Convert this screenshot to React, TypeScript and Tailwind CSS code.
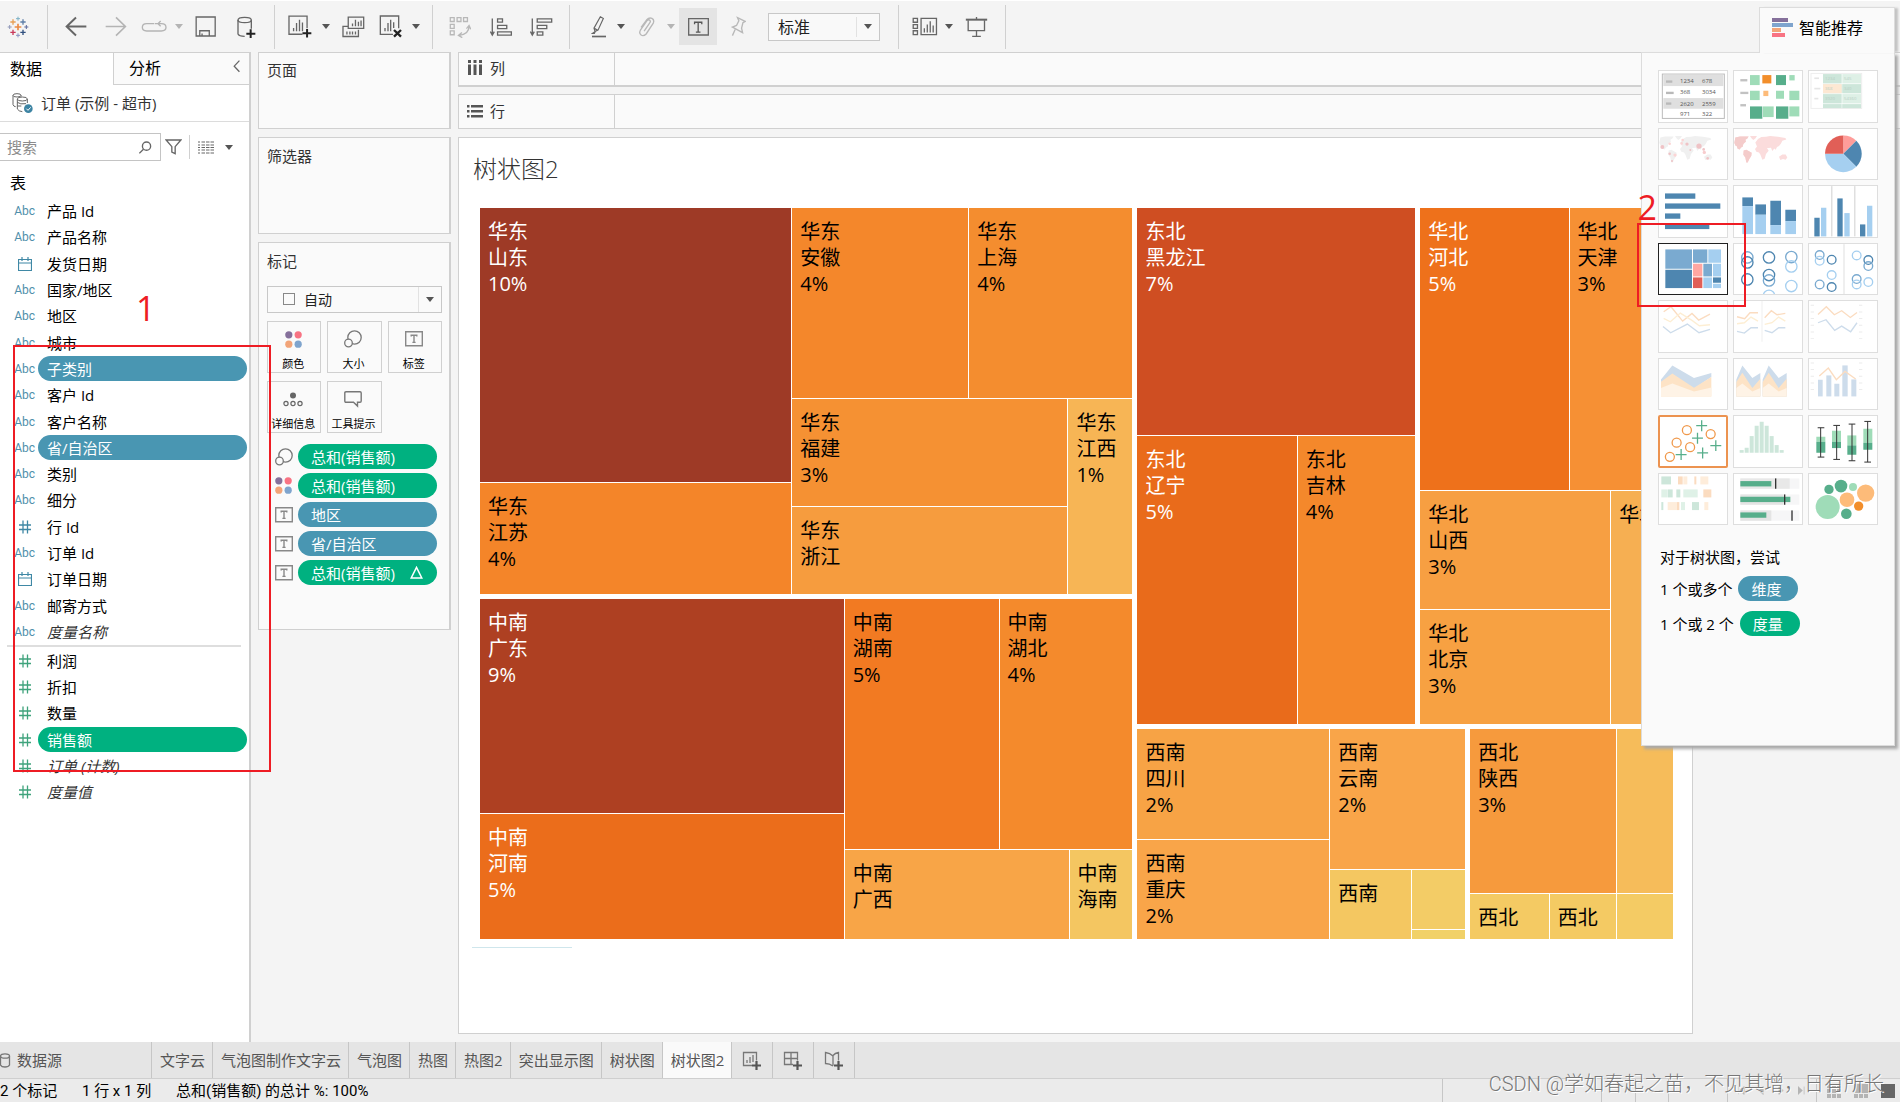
import React from "react";

type IconProps = { box: string; w: number; h: number; children: React.ReactNode; className?: string };

/** Line icon drawn on a grid of three units per pixel. */
function Icon({ box, w, h, children, className = "" }: IconProps) {
  return (
    <svg viewBox={box} width={w} height={h} className={"shrink-0 " + className} fill="none" stroke="#666" strokeWidth={4} aria-hidden="true">
      {children}
    </svg>
  );
}

function Caret({ light = false }: { light?: boolean }) {
  return (
    <svg viewBox="0 0 8 5" width={8} height={5} className="shrink-0" aria-hidden="true">
      <path d="M0 0h8L4 5z" fill={light ? "#b4b4b4" : "#555"} />
    </svg>
  );
}

function Tool({ label, className, children }: { label: string; className: string; children: React.ReactNode }) {
  return (
    <button type="button" aria-label={label} className={"flex h-[37px] shrink-0 items-center justify-center " + className}>
      {children}
    </button>
  );
}

function Sep({ className }: { className: string }) {
  return <div className={"h-11 w-px shrink-0 bg-[#d0d0d0] " + className} />;
}

const plus = (x: number, y: number, r: number, c: string, w = 4) => (
  <path key={x + "-" + y} d={`M${x - r} ${y}h${2 * r}M${x} ${y - r}v${2 * r}`} stroke={c} strokeWidth={w} />
);

function Toolbar() {
  return (
    <header className="flex h-[52px] items-center border-t border-white bg-[#f4f4f4]">
      <Tool label="Tableau" className="w-9">
        <Icon box="21 47 66 66" w={22} h={22}>
          {plus(54, 80, 10, "#eb8a44", 5)}
          {plus(39, 65, 8, "#e8a157", 4)}
          {plus(69, 65, 8, "#5e7fa8", 4)}
          {plus(39, 96, 8, "#c9395a", 4)}
          {plus(69, 96, 8, "#31507f", 4)}
          {plus(54, 55, 6, "#7db0c4", 3)}
          {plus(54, 105, 6, "#8a93c2", 3)}
          {plus(29, 80, 6, "#9098b8", 3)}
          {plus(79, 80, 6, "#5d6a9e", 3)}
        </Icon>
      </Tool>
      <Sep className="ml-[11px]" />
      <Tool label="撤消" className="ml-2 w-10">
        <Icon box="192 48 68 64" w={22} h={21}><path d="M258 80H198M226 52l-29 28 29 28" strokeWidth={6} /></Icon>
      </Tool>
      <Tool label="重做" className="w-10">
        <Icon box="312 48 68 64" w={22} h={21}><path d="M314 80h60M346 52l29 28-29 28" strokeWidth={5} stroke="#b4b4b4" /></Icon>
      </Tool>
      <Tool label="重播" className="w-9">
        <Icon box="421 58 78 42" w={26} h={14}>
          <path d="M460 69h-22q-13 0-13 11t13 11h44q14 0 14-11t-14-11h-6M480 61l-8 8 8 8M462 69h14" stroke="#b4b4b4" />
        </Icon>
      </Tool>
      <Tool label="重播选项" className="w-[14px]"><Caret light /></Tool>
      <Tool label="保存" className="w-10">
        <Icon box="584 48 66 64" w={22} h={21}><path d="M587 51h58v58h-58zM598 109V93h29v16M605 109v-8" /></Icon>
      </Tool>
      <Tool label="新建数据源" className="w-10">
        <Icon box="708 47 57 66" w={19} h={22}>
          <ellipse cx="731" cy="59" rx="20" ry="8" />
          <path d="M711 59v42q3 7 20 7M751 59v26" />
          <path d="M736 100h27M749 87v26" stroke="#222" strokeWidth={6} />
        </Icon>
      </Tool>
      <Sep className="ml-2" />
      <Tool label="新建工作表" className="ml-1.5 w-[38px]">
        <Icon box="864 45 73 69" w={24} h={23}>
          <path d="M908 103h-41V48h55v37M881 94V84M890 94V69M899 94V59M908 94V67" />
          <path d="M908 100h27M922 87v26" stroke="#222" strokeWidth={6} />
        </Icon>
      </Tool>
      <Tool label="新建选项" className="w-[14px]"><Caret /></Tool>
      <Tool label="复制工作表" className="w-10">
        <Icon box="1026 45 70 66" w={23} h={22}>
          <path d="M1045 48h47v34h-47zM1058 76V67M1067 76V56M1076 76V62M1084 76V58M1043 76h-14v31h47V86M1041 101v-9M1050 101v-9M1058 101v-9M1067 101v-9" />
        </Icon>
      </Tool>
      <Tool label="清除工作表" className="w-9">
        <Icon box="1136 45 72 69" w={24} h={23}>
          <path d="M1178 103h-38V48h55v37M1154 94V84M1163 94V69M1171 94V59M1180 84V67" />
          <path d="M1181 90l21 20M1202 90l-21 20" stroke="#222" strokeWidth={7} />
        </Icon>
      </Tool>
      <Tool label="清除选项" className="w-[14px]"><Caret /></Tool>
      <Sep className="ml-[9px]" />
      <Tool label="交换行和列" className="ml-2 w-[38px]">
        <Icon box="1346 45 68 68" w={22} h={22}>
          <path d="M1350 50h12v12h-12zM1371 50h12v12h-12zM1391 50h12v12h-12zM1350 71h12v12h-12zM1350 91h12v12h-12zM1408 76q0 26-31 29M1400 84l8-10 5 12M1386 96l-11 9 12 7" stroke="#b8b8b8" />
        </Icon>
      </Tool>
      <Tool label="升序排序" className="ml-0.5 w-10">
        <Icon box="1468 48 70 60" w={23} h={20}>
          <path d="M1475 52v48M1469 92l6 11 6-11M1491 53h15v10h-15zM1491 73h28v10h-28zM1491 93h42v10h-42z" />
        </Icon>
      </Tool>
      <Tool label="降序排序" className="w-10">
        <Icon box="88 48 70 60" w={23} h={20}>
          <path d="M95 52v48M89 92l6 11 6-11M110 53h44v10h-44zM110 73h29v10h-29zM110 93h17v10h-17z" />
        </Icon>
      </Tool>
      <Sep className="ml-2" />
      <Tool label="突出显示" className="ml-[13px] w-[31px]">
        <Icon box="272 47 48 68" w={16} h={23}>
          <path d="M300 52l9 5-16 35-9 4-3-10zM276 102l9-6-3 6zM282 86l10 6" strokeWidth={3.5} />
          <path d="M275 111h42" strokeWidth={5} />
        </Icon>
      </Tool>
      <Tool label="突出显示选项" className="w-[14px]"><Caret /></Tool>
      <Tool label="分组成员" className="w-9">
        <Icon box="414 48 50 62" w={17} h={21}>
          <path d="M423 82l16-22q8-9 16-5t4 14l-21 32q-8 8-15 3t-2-14l20-29q5-4 8 0t-1 8l-16 24" stroke="#b8b8b8" />
        </Icon>
      </Tool>
      <Tool label="分组选项" className="w-[14px]"><Caret light /></Tool>
      <Tool label="显示标记标签" className="ml-px w-[38px] bg-[#e4e4e4]">
        <Icon box="562 48 68 58" w={23} h={19}>
          <path d="M566 53h60v50h-60z" />
          <path d="M584 70v-6h22v6M595 64v30M588 94h14" stroke="#555" strokeWidth={4} />
        </Icon>
      </Tool>
      <Tool label="固定轴" className="w-10">
        <Icon box="688 48 50 62" w={17} h={21}>
          <path d="M713 53l23 11-7 4-4 16 3 13-30-16 12-5 7-14zM706 88l-8 18" stroke="#b8b8b8" />
        </Icon>
      </Tool>
      <div className="relative ml-[11px] w-28 shrink-0">
        <select aria-label="适合" className="h-7 w-full appearance-none border border-[#c8c8c8] bg-[#f9f9f9] pl-[9px] text-base leading-6 text-[#222]">
          <option>标准</option>
        </select>
        <div className="pointer-events-none absolute inset-y-1 right-0 flex w-6 items-center justify-center border-l border-[#e2e2e2] pr-0.5"><Caret /></div>
      </div>
      <Sep className="ml-[18px]" />
      <Tool label="显示/隐藏卡" className="ml-[9px] w-[34px]">
        <Icon box="1240 50 78 58" w={26} h={19}>
          <path d="M1243 54h13v12h-13zM1243 73h13v12h-13zM1243 92h13v12h-13zM1267 54h47v50h-47zM1277 97V84M1286 97V73M1295 97V63M1304 97V76" />
        </Icon>
      </Tool>
      <Tool label="卡选项" className="w-[14px]"><Caret /></Tool>
      <Tool label="演示模式" className="w-10">
        <Icon box="1396 47 68 66" w={23} h={22}>
          <path d="M1398 58h64" strokeWidth={6} />
          <path d="M1430 50v8M1405 60v31h49V60M1430 91v16M1417 108h26" />
        </Icon>
      </Tool>
      <Sep className="ml-[9px]" />
    </header>
  );
}

type Kind = "abc" | "date" | "num";
type Field = { kind: Kind; name: string; picked?: boolean; generated?: boolean };

const dimensions: Field[] = [
  { kind: "abc", name: "产品 Id" },
  { kind: "abc", name: "产品名称" },
  { kind: "date", name: "发货日期" },
  { kind: "abc", name: "国家/地区" },
  { kind: "abc", name: "地区" },
  { kind: "abc", name: "城市" },
  { kind: "abc", name: "子类别", picked: true },
  { kind: "abc", name: "客户 Id" },
  { kind: "abc", name: "客户名称" },
  { kind: "abc", name: "省/自治区", picked: true },
  { kind: "abc", name: "类别" },
  { kind: "abc", name: "细分" },
  { kind: "num", name: "行 Id" },
  { kind: "abc", name: "订单 Id" },
  { kind: "date", name: "订单日期" },
  { kind: "abc", name: "邮寄方式" },
  { kind: "abc", name: "度量名称", generated: true },
];

const measures: Field[] = [
  { kind: "num", name: "利润" },
  { kind: "num", name: "折扣" },
  { kind: "num", name: "数量" },
  { kind: "num", name: "销售额", picked: true },
  { kind: "num", name: "订单 (计数)", generated: true },
  { kind: "num", name: "度量值", generated: true },
];

function FieldRow({ field, measure }: { field: Field; measure: boolean }) {
  const c = measure ? "#3fa37c" : "#3f88a5";
  return (
    <li className="flex min-h-0 flex-1 items-center">
      <span className="flex w-[38px] shrink-0 items-center justify-end pr-[3px]">
        {field.kind === "abc" && <span className="text-xs leading-5 text-[#4f8fab] [font-family:Roboto,sans-serif]">Abc</span>}
        {field.kind === "date" && (
          <svg viewBox="0 0 14 14" width={14} height={14} fill="none" stroke={c} className="mr-[3px]" aria-hidden="true">
            <path d="M.5 2.5h13v11H.5zM.5 6h13M4 0v4M10 0v4" strokeWidth={1.2} />
          </svg>
        )}
        {field.kind === "num" && (
          <svg viewBox="0 0 14 14" width={14} height={14} fill="none" stroke={c} className="mr-[3px]" aria-hidden="true">
            <path d="M1 5h12M1 9.5h12M5 .5v13M9.5 .5v13" strokeWidth={1.3} />
          </svg>
        )}
      </span>
      <button
        type="button"
        className={
          "h-[25px] w-[209px] rounded-full px-[9px] text-left leading-6 " +
          (field.picked ? (measure ? "bg-[#00b180] text-white" : "bg-[#4996b2] text-white") : field.generated ? "italic text-[#333]" : "text-black")
        }
      >
        {field.name}
      </button>
    </li>
  );
}

function DataPane() {
  return (
    <aside className="relative flex w-[251px] shrink-0 flex-col border-r-2 border-[#d0d0d0] bg-white">
      <div className="flex h-[33px] shrink-0 text-base leading-6 text-black">
        <button type="button" className="w-[113px] border-t border-[#d0d0d0] pb-px pl-[10px] text-left">数据</button>
        <button type="button" className="flex-1 border border-r-0 border-[#d0d0d0] bg-[#fafafa] pb-px pl-[15px] text-left">分析</button>
        <button type="button" aria-label="折叠" className="flex w-[26px] items-center justify-center border-y border-[#d0d0d0] bg-[#fafafa] pb-1">
          <Icon box="696 182 26 40" w={9} h={13}><path d="M718 184l-16 17 16 17" /></Icon>
        </button>
      </div>
      <button type="button" className="flex h-[37px] shrink-0 items-center gap-2 border-b border-[#dcdcdc] pl-3 text-left text-[#333]">
        <Icon box="37 278 63 63" w={21} h={21}>
          <g strokeWidth={3}>
            <ellipse cx="52" cy="285" rx="12" ry="5" />
            <path d="M40 285v28q2 6 8 6M64 285v4" />
            <ellipse cx="68" cy="296" rx="15" ry="6" />
            <path d="M53 296v30q4 7 15 8M83 296v12M53 306q8 7 26 4M53 317h12" />
          </g>
          <circle cx="86" cy="325" r="13" fill="#3d84a3" stroke="none" />
          <path d="M80 325l5 5 8-9" stroke="#fff" strokeWidth={3} />
        </Icon>
        订单 (示例 - 超市)
      </button>
      <div className="mt-[11px] flex h-7 shrink-0 items-center">
        <label className="flex h-full w-[161px] items-center border border-l-0 border-[#c4c4c4] pr-2">
          <input type="text" placeholder="搜索" aria-label="搜索" className="w-full min-w-0 pl-[7px] outline-none placeholder:text-[#8c8c8c]" />
          <Icon box="420 424 38 38" w={13} h={13}><circle cx="442" cy="439" r="12" /><path d="M433 448l-12 12" /></Icon>
        </label>
        <button type="button" aria-label="筛选" className="flex w-[25px] items-center justify-center">
          <Icon box="496 418 50 48" w={17} h={16}><path d="M499 421h44l-17 20v21l-10-5v-16z" /></Icon>
        </button>
        <button type="button" aria-label="视图" className="ml-[3px] flex h-6 items-center border-l border-[#d0d0d0] pl-2">
          <svg viewBox="0 0 16 13" width={16} height={13} stroke="#666" strokeWidth={1.2} aria-hidden="true">
            <path d="M0 1h2M3.500 1h3.500M8 1h3.500M12.500 1h3.500M0 4h2M3.500 4h3.500M8 4h3.500M12.500 4h3.500M0 6.500h2M3.500 6.500h3.500M8 6.500h3.500M12.500 6.500h3.500M0 9h2M3.500 9h3.500M8 9h3.500M12.500 9h3.500M0 12h2M3.500 12h3.500M8 12h3.500M12.500 12h3.500" />
          </svg>
          <span className="ml-[11px]"><Caret /></span>
        </button>
      </div>
      <h2 className="mt-[10px] shrink-0 pl-[10px] text-base leading-6 text-black">表</h2>
      <ul className="mt-[3px] flex h-[447px] shrink-0 flex-col">
        {dimensions.map((f) => <FieldRow key={f.name} field={f} measure={false} />)}
      </ul>
      <hr className="mr-2 ml-[7px] border-0 border-t-2 border-[#dedede]" />
      <ul className="mt-px flex h-[157px] shrink-0 flex-col">
        {measures.map((f) => <FieldRow key={f.name} field={f} measure />)}
      </ul>
    </aside>
  );
}

const ColorDots = () => (
  <svg viewBox="0 0 16 16" width={17} height={17} aria-hidden="true">
    <circle cx="3.6" cy="3.6" r="3.4" fill="#85709b" />
    <circle cx="12.4" cy="3.6" r="3.4" fill="#f87383" />
    <circle cx="3.6" cy="12.4" r="3.4" fill="#f2a478" />
    <circle cx="12.4" cy="12.4" r="3.4" fill="#7fa4cd" />
  </svg>
);

const SizeIcon = () => (
  <svg viewBox="0 0 18 18" width={18} height={18} fill="none" stroke="#777" strokeWidth={1.3} aria-hidden="true">
    <circle cx="10.5" cy="7.5" r="6.7" />
    <circle cx="4.5" cy="13" r="3.8" fill="#fafafa" />
  </svg>
);

const LabelIcon = () => (
  <svg viewBox="0 0 18 16" width={18} height={16} fill="none" stroke="#888" strokeWidth={1.4} aria-hidden="true">
    <path d="M.7 .7h16.6v14H.7zM6.2 5.6V4.2h5.6v1.4M9 4.2v7.2M7.4 11.4h3.2" />
  </svg>
);

const DetailIcon = () => (
  <svg viewBox="0 0 20 15" width={20} height={15} fill="none" stroke="#666" strokeWidth={1.2} aria-hidden="true">
    <circle cx="10" cy="3.5" r="3" fill="#666" stroke="none" />
    <circle cx="3" cy="11.5" r="2.1" /><circle cx="10" cy="11.5" r="2.1" /><circle cx="17" cy="11.5" r="2.1" />
  </svg>
);

const TooltipIcon = () => (
  <svg viewBox="0 0 18 17" width={18} height={17} fill="none" stroke="#777" strokeWidth={1.4} aria-hidden="true">
    <path d="M2 .8h14q1.2 0 1.2 1.2v8q0 1.2-1.2 1.2h-2.5V15L9.500 11.200H2Q.8 11.200 .8 10V2Q.8 .8 2 .8z" />
  </svg>
);

const markCells = [
  { label: "颜色", icon: <ColorDots /> },
  { label: "大小", icon: <SizeIcon /> },
  { label: "标签", icon: <LabelIcon /> },
  { label: "详细信息", icon: <DetailIcon /> },
  { label: "工具提示", icon: <TooltipIcon /> },
];

const pills = [
  { label: "总和(销售额)", green: true, icon: <SizeIcon />, delta: false },
  { label: "总和(销售额)", green: true, icon: <ColorDots />, delta: false },
  { label: "地区", green: false, icon: <LabelIcon />, delta: false },
  { label: "省/自治区", green: false, icon: <LabelIcon />, delta: false },
  { label: "总和(销售额)", green: true, icon: <LabelIcon />, delta: true },
];

const card = "border border-r-2 border-[#d0d0d0] bg-[#fafafa]";

function Cards() {
  return (
    <div className="ml-[7px] flex w-[193px] shrink-0 flex-col gap-2 text-[#333]">
      <section className={"h-[77px] px-2 pt-1.5 " + card}>页面</section>
      <section className={"h-[97px] px-2 pt-[7px] " + card}>筛选器</section>
      <section className={"h-[388px] pr-[7px] pl-2 " + card}>
        <h3 className="pt-1.5 leading-6">标记</h3>
        <div className="relative mt-[13px]">
          <select aria-label="标记类型" className="h-[27px] w-full appearance-none border border-[#c8c8c8] bg-[#fafafa] pl-[36px] text-[14px] leading-5 text-[#222]">
            <option>自动</option>
          </select>
          <span className="pointer-events-none absolute top-[7px] left-4 size-3 border border-[#888]" />
          <span className="pointer-events-none absolute inset-y-px right-0 flex w-6 items-center justify-center border-l border-[#e2e2e2] pr-0.5"><Caret /></span>
        </div>
        <div className="mt-2 grid grid-cols-3 gap-x-[6px] gap-y-2">
          {markCells.map((m) => (
            <button key={m.label} type="button" className="flex h-[52px] flex-col items-center border border-[#d0d0d0] pr-0.5 text-[11px] leading-4 whitespace-nowrap text-black">
              <span className="flex h-[34px] shrink-0 items-center justify-center">{m.icon}</span>
              {m.label}
            </button>
          ))}
        </div>
        <ul className="mt-[11px] flex flex-col gap-1">
          {pills.map((p, i) => (
            <li key={i} className="flex h-[25px] items-center">
              <span className="flex w-[31px] shrink-0 justify-center pl-0.5">{p.icon}</span>
              <button type="button" className={"flex h-full w-[139px] items-center justify-between rounded-full pr-[14px] pl-[13px] leading-6 text-white " + (p.green ? "bg-[#00b180]" : "bg-[#4996b2]")}>
                {p.label}
                {p.delta && (
                  <svg viewBox="0 0 14 14" width={13} height={13} fill="none" stroke="#fff" strokeWidth={1.6} aria-hidden="true"><path d="M7 1.500L12.700 12.800H1.300z" /></svg>
                )}
              </button>
            </li>
          ))}
        </ul>
      </section>
    </div>
  );
}

type Tile = { size: number; color: string; lines?: string[]; light?: boolean };
type Split = { size: number; dir: "row" | "col"; wide?: boolean; items: TreeNode[] };
type TreeNode = Tile | Split;

const t = (size: number, color: string, text = "", light = false): Tile => ({ size, color, lines: text ? text.split(" ") : [], light });
const row = (size: number, items: TreeNode[], wide = false): Split => ({ size, dir: "row", items, wide });
const col = (size: number, items: TreeNode[], wide = false): Split => ({ size, dir: "col", items, wide });

const east = row(386, [
  col(311, [t(274, "#9e3a26", "华东 山东 10%", true), t(111, "#f48529", "华东 江苏 4%")]),
  col(340, [
    row(190, [t(176, "#f4872b", "华东 安徽 4%"), t(163, "#f48d2f", "华东 上海 4%")]),
    row(195, [col(275, [t(107, "#f59133", "华东 福建 3%"), t(87, "#f69c3e", "华东 浙江")]), t(64, "#f7b555", "华东 江西 1%")]),
  ]),
]);

const southCentral = row(340, [
  col(364, [t(214, "#ae4022", "中南 广东 9%", true), t(125, "#eb6d1b", "中南 河南 5%", true)]),
  col(288, [
    row(250, [t(154, "#f27a22", "中南 湖南 5%"), t(133, "#f48a2c", "中南 湖北 4%")]),
    row(89, [t(224, "#f8a547", "中南 广西"), t(63, "#f4c661", "中南 海南")]),
  ]),
]);

const northEast = col(278, [
  t(227, "#cf4e22", "东北 黑龙江 7%", true),
  row(289, [t(160, "#e96b1b", "东北 辽宁 5%", true), t(118, "#f4882b", "东北 吉林 4%")]),
]);

const north = col(253, [
  row(283, [t(149, "#ee711b", "华北 河北 5%", true), t(104, "#f69034", "华北 天津 3%")]),
  row(233, [col(191, [t(118, "#f79f42", "华北 山西 3%"), t(114, "#f7a142", "华北 北京 3%")]), t(62, "#f6af52", "华北")]),
]);

const southWest = row(328, [
  col(192, [t(110, "#f7a345", "西南 四川 2%"), t(99, "#f9a549", "西南 重庆 2%")]),
  col(135, [
    t(140, "#f9a549", "西南 云南 2%"),
    row(69, [t(81, "#f4c761", "西南"), col(54, [t(59, "#f3cc66"), t(9, "#f1d168")])]),
  ]),
]);

const northWest = col(203, [
  row(164, [t(146, "#f69a3d", "西北 陕西 3%"), t(56, "#f6bc5a")]),
  row(45, [t(79, "#f4ca63", "西北"), t(67, "#f4ca63", "西北"), t(56, "#f4cb64")]),
]);

const tree = row(
  1,
  [
    col(653, [east, southCentral], true),
    col(536, [row(516, [northEast, north], true), row(210, [southWest, northWest], true)], true),
  ],
  true,
);

function TreeMap({ node }: { node: TreeNode }) {
  if ("items" in node) {
    return (
      <div
        className={"flex min-h-0 min-w-0 basis-0 " + (node.dir === "row" ? "flex-row " : "flex-col ") + (node.wide ? "gap-[5px]" : "gap-px")}
        style={{ flexGrow: node.size }}
      >
        {node.items.map((n, i) => <TreeMap key={i} node={n} />)}
      </div>
    );
  }
  return (
    <div
      className={"min-h-0 min-w-0 basis-0 overflow-hidden text-xl leading-[26px] whitespace-nowrap " + (node.light ? "text-white" : "text-black")}
      style={{ flexGrow: node.size, backgroundColor: node.color }}
    >
      {node.lines && node.lines.length > 0 && (
        <div className="pt-[11px] pl-2">
          {node.lines.map((l) => <div key={l}>{l}</div>)}
        </div>
      )}
    </div>
  );
}

function Shelf({ label, icon, className }: { label: string; icon: React.ReactNode; className: string }) {
  return (
    <div className={"flex h-[35px] shrink-0 border border-r-0 border-[#d0d0d0] bg-[#fafafa] " + className}>
      <div className="flex w-[156px] items-center gap-[7px] border-r border-[#d0d0d0] pb-0.5 pl-2 text-[#333]">
        {icon}
        {label}
      </div>
    </div>
  );
}

function Canvas() {
  return (
    <main className="ml-[7px] flex min-w-0 flex-1 flex-col">
      <Shelf
        label="列"
        className="border-b-2"
        icon={<svg viewBox="0 0 16 16" width={16} height={16} fill="#555" aria-hidden="true"><path d="M1 0h3v3H1zM6.500 0h3v3h-3zM12 0h3v3h-3zM1 4.500h3V15H1zM6.500 4.500h3V15h-3zM12 4.500h3V15h-3z" /></svg>}
      />
      <Shelf
        label="行"
        className="mt-[7px]"
        icon={<svg viewBox="0 0 16 16" width={16} height={16} fill="#555" aria-hidden="true"><path d="M0 2h2.500v2.500H0zM0 7h2.500v2.500H0zM0 12h2.500v2.500H0zM4 2h12v2.500H4zM4 7h12v2.500H4zM4 12h12v2.500H4z" /></svg>}
      />
      <section className="mt-2 mr-[207px] mb-2 flex min-h-0 flex-1 flex-col border border-[#d0d0d0] bg-white px-[14px]">
        <h1 className="mt-3 mb-[21px] text-2xl leading-[37px] font-light text-[#333]">树状图2</h1>
        <div className="mr-[5px] ml-[7px] flex min-h-[700px] flex-1">
          <TreeMap node={tree} />
        </div>
        <div className="mt-2 mb-[85px] ml-[-1px] h-px w-[100px] bg-[#cfe6ec]" />
      </section>
    </main>
  );
}

/* Chart thumbnails share one grid, three units per pixel; row and column pick the window onto it. */
const cols = [116, 341, 566];
const rows = [213, 386, 559, 731, 903, 1076, 1249, 1421];

const B = "#4e86b0";
const L = "#a5cff0";
const G = "#57ae8b";
const LG = "#9fdcb8";

const rect = (x: number, y: number, w: number, h: number, c: string, i?: number) => <rect key={`${x}-${y}-${i ?? 0}`} x={x} y={y} width={w} height={h} fill={c} />;
const ring = (x: number, y: number, r: number, c: string, w = 4) => <circle key={`${x}-${y}`} cx={x} cy={y} r={r} stroke={c} strokeWidth={w} fill="none" />;
const dot = (x: number, y: number, r: number, c: string) => <circle key={`${x}-${y}`} cx={x} cy={y} r={r} fill={c} />;
const line = (d: string, c: string, w = 4) => <path d={d} stroke={c} strokeWidth={w} fill="none" />;

const landMass =
  "M0 3l14-3 26 0-4 6-6 4 2 5-8 8-2 8-5 2-4 6-6-2-3-8-4-2-3-8zM44-1l21 0-5 7-6 5-5-5zM25 42l8-2 16 9-1 9-6 10-5 10-4 0-3-15-6-8zM60 18l8-10 10-6 14-1 12-2 24 2 22 4 3 4-12 4-4 8-6 8-6 3-4 8-4-4-6 8-4-10-8 1-4 0 5 8-8 10-4 14-7 3-6-16-4-6-8-2-4-8 6-8zM131 61l10-7 10 0 5 9-5 7-8-2-8 3z";

const thumbs: { label: string; draw: React.ReactNode }[] = [
  {
    label: "文本表",
    draw: (
      <>
        <rect x="126" y="222" width="186" height="133" fill="#fff" stroke="#bbb" strokeWidth={3} />
        {rect(129, 224, 180, 34, "#dfdfdf")}{rect(129, 294, 180, 32, "#dfdfdf")}
        {rect(137, 241, 19, 7, "#b9b9b9")}{rect(137, 275, 23, 7, "#b9b9b9")}{rect(137, 307, 16, 7, "#b9b9b9")}
        <g fontSize={18} fill="#555">
          <text x="179" y="249">1234</text><text x="245" y="249">678</text>
          <text x="179" y="283">368</text><text x="245" y="283">3034</text>
          <text x="179" y="317">2620</text><text x="245" y="317">2559</text>
          <text x="179" y="348">971</text><text x="245" y="348">322</text>
        </g>
      </>
    ),
  },
  {
    label: "压力图",
    draw: (
      <>
        {rect(360, 237, 21, 7, "#c2c2c2")}{rect(360, 275, 24, 7, "#c2c2c2")}{rect(360, 312, 17, 7, "#c2c2c2")}
        {rect(389, 225, 29, 30, LG)}{rect(426, 225, 27, 25, "#f28e2b")}{rect(467, 225, 30, 30, G)}{rect(507, 225, 16, 16, LG)}
        {rect(389, 272, 29, 28, LG)}{rect(429, 272, 15, 16, "#fdbb79")}{rect(467, 272, 24, 24, LG)}{rect(507, 272, 30, 28, LG)}
        {rect(389, 319, 37, 37, G)}{rect(428, 319, 32, 32, LG)}{rect(467, 319, 37, 37, G)}{rect(507, 319, 30, 30, LG)}
      </>
    ),
  },
  {
    label: "突出显示表",
    draw: (
      <>
        <rect x="572" y="220" width="152" height="105" fill="#fff" stroke="#eee" strokeWidth={3} />
        {rect(608, 222, 56, 102, "#cde6da")}{rect(666, 222, 56, 102, "#def0e6")}
        {rect(608, 252, 56, 28, "#fde8d3")}{rect(666, 252, 56, 28, "#cde6da")}{rect(608, 250, 114, 2, "#fff")}{rect(608, 280, 114, 2, "#fff")}
        {rect(666, 312, 56, 12, "#cde6da")}{rect(608, 310, 114, 2, "#fff")}
        {rect(582, 232, 14, 5, "#e5e5e5")}{rect(582, 263, 18, 5, "#e5e5e5")}{rect(582, 293, 12, 5, "#e5e5e5")}
        <g fontSize={13} fill="#b9cfc4">
          <text x="614" y="239">1234</text><text x="671" y="239">545</text>
          <text x="614" y="271">368</text><text x="671" y="271">340</text>
          <text x="614" y="301">3920</text><text x="671" y="301">54360</text>
        </g>
      </>
    ),
  },
  {
    label: "符号地图",
    draw: (
      <>
        <path d={landMass} transform="translate(120 408)" fill="#f0f0f0" />
        {dot(126, 440, 6, "#efc3c6")}{dot(148, 430, 4, "#fbd5d5")}{dot(187, 419, 4, "#fbd5d5")}{dot(184, 429, 4, "#fbd5d5")}{dot(200, 431, 5, "#efc3c6")}
        {dot(236, 437, 8, "#efc3c6")}{dot(250, 447, 4, "#efc3c6")}{dot(252, 456, 5, "#f7cccd")}{dot(210, 449, 3, "#efc3c6")}{dot(148, 460, 4, "#efc3c6")}{dot(164, 464, 5, "#fbd5d5")}{dot(155, 482, 3, "#efc3c6")}{dot(262, 474, 4, "#efc3c6")}
      </>
    ),
  },
  {
    label: "地图",
    draw: (
      <>
        <path d={landMass} transform="translate(345 408)" fill="#fbdcdc" />
        <path d="M0 3l14-3 26 0-4 6-6 4 2 5-8 8-2 8-5 2-4 6-6-2-3-8-4-2-3-8zM25 42l8-2 16 9-1 9-6 10-5 10-4 0-3-15-6-8z" transform="translate(345 408)" fill="#f4cccb" />
      </>
    ),
  },
  {
    label: "饼图",
    draw: (
      <>
        <path d="M669 460V405A55 55 0 0 1 708 421z" fill="#ff9d9a" />
        <path d="M669 460L708 421A55 55 0 0 1 708 499z" fill={B} />
        <path d="M669 460L708 499A55 55 0 0 1 614 460z" fill={L} />
        <path d="M669 460H614A55 55 0 0 1 669 405z" fill="#e15f57" />
      </>
    ),
  },
  { label: "水平条", draw: <>{rect(134, 581, 91, 16, B)}{rect(134, 611, 166, 16, B)}{rect(134, 641, 46, 16, B)}{rect(134, 672, 133, 16, B)}</> },
  {
    label: "堆叠条",
    draw: (
      <>
        {rect(366, 593, 32, 26, B)}{rect(366, 619, 32, 84, L)}{rect(405, 614, 32, 31, B)}{rect(405, 645, 32, 58, L)}
        {rect(450, 603, 32, 73, B)}{rect(450, 676, 32, 27, L)}{rect(495, 630, 32, 34, B)}{rect(495, 664, 32, 39, L)}
      </>
    ),
  },
  {
    label: "并排条",
    draw: (
      <>
        {rect(633, 559, 3, 151, "#d0d0d0")}{rect(702, 559, 3, 151, "#d0d0d0")}
        {rect(582, 654, 16, 56, B)}{rect(602, 624, 16, 86, L)}{rect(651, 596, 16, 114, B)}{rect(672, 640, 16, 70, L)}{rect(719, 674, 16, 36, B)}{rect(740, 618, 16, 92, L)}
      </>
    ),
  },
  {
    label: "树状图",
    draw: (
      <>
        {rect(135, 747, 80, 58, "#7aaad0")}{rect(135, 808, 80, 55, B)}{rect(218, 747, 43, 40, "#7aaad0")}{rect(264, 747, 38, 40, L)}
        {rect(218, 790, 28, 38, "#ffa7a2")}{rect(249, 790, 26, 38, "#7aaad0")}{rect(278, 790, 24, 38, L)}
        {rect(218, 831, 28, 32, "#e15f57")}{rect(249, 831, 26, 32, L)}{rect(278, 831, 24, 16, B)}{rect(278, 850, 24, 13, L)}
      </>
    ),
  },
  {
    label: "圆视图",
    draw: (
      <>
        {ring(381, 771, 17, "#7aaad0")}{ring(381, 786, 17, B)}{ring(381, 837, 17, B)}{ring(446, 771, 17, B)}{ring(446, 824, 17, B)}{ring(446, 840, 17, "#7aaad0")}{ring(446, 886, 17, L)}
        {ring(513, 770, 17, "#7aaad0")}{ring(513, 798, 17, L)}{ring(513, 857, 17, L)}
      </>
    ),
  },
  {
    label: "并排圆",
    draw: (
      <>
        {rect(670, 731, 2, 151, "#d0d0d0")}
        {ring(598, 764, 13, "#7aaad0")}{ring(598, 781, 13, L)}{ring(634, 778, 13, B)}{ring(634, 824, 13, L)}{ring(598, 852, 13, "#7aaad0")}{ring(634, 860, 13, B)}
        {ring(709, 765, 13, L)}{ring(744, 779, 13, B)}{ring(744, 797, 13, "#7aaad0")}{ring(709, 836, 13, "#7aaad0")}{ring(709, 852, 13, L)}{ring(744, 845, 13, L)}
      </>
    ),
  },
  { label: "连续线", draw: <>{line("M130 935l22-15 35 43 28-23 20 20 34-18", "#fbdcc0")}{line("M130 955l20 10 30-26 35 22 22 16 32-3", "#fdeed3")}{line("M128 979l23 19 50-26 35 26 33-10", "#cddceb")}</> },
  {
    label: "离散线",
    draw: (
      <>
        {rect(424, 903, 2, 122, "#e6e6e6")}
        {line("M350 950l23 6 16-18 24 0M433 953l20-21 17 12 25-4", "#fbdcc0")}{line("M350 971l22-3 20-17 21 12M433 973l22-5 20-17 20 12", "#fdeed3")}{line("M350 994l22 5 20-16 21 0M433 991l22 7 20-15 20 0", "#cddceb")}
      </>
    ),
  },
  {
    label: "双线",
    draw: (
      <>
        <path d="M576 914v102M721 914v102" stroke="#ececec" strokeWidth={10} strokeDasharray="3 17" />
        {line("M593 943l25-23 24 24 22-12 26 20 20-15", "#fbdcc0")}{line("M593 968l24-9 26 32 21-13 27 17 19-27", "#cddceb")}
      </>
    ),
  },
  { label: "连续面积图", draw: <><path d="M122 1137l34-42 65 38 52-15v12l-52 35-65-43-34 25z" fill="#cddceb" /><path d="M122 1144l34-25 65 43 52-32v58H122z" fill="#fde3c6" /><path d="M122 1163l34-14 65 24 52-12v27H122z" fill="#fef3e6" /></> },
  {
    label: "离散面积图",
    draw: (
      <>
        {[0, 79].map((x) => (
          <g key={x} transform={`translate(${x} 0)`}>
            <path d="M348 1137l18-42 30 38 24-15v70h-72z" fill="#cddceb" /><path d="M348 1145l18-28 30 46 24-28v53h-72z" fill="#fde3c6" /><path d="M348 1163l18-14 30 24 24-10v25h-72z" fill="#fef3e6" />
          </g>
        ))}
      </>
    ),
  },
  {
    label: "双组合",
    draw: (
      <>
        {rect(593, 1138, 14, 50, "#cddceb")}{rect(618, 1125, 15, 63, "#cddceb")}{rect(642, 1150, 15, 38, "#cddceb")}{rect(666, 1095, 16, 93, "#cddceb")}{rect(693, 1137, 15, 51, "#cddceb")}
        {line("M597 1127l27-24 24 35 26-25 32 23", "#fbdcc0")}
        <path d="M576 1086v100M721 1086v100" stroke="#ececec" strokeWidth={10} strokeDasharray="3 17" />
      </>
    ),
  },
  {
    label: "散点图",
    draw: (
      <>
        {ring(199, 1290, 14, "#f0984a")}{ring(273, 1302, 14, "#f0984a")}{ring(167, 1329, 14, "#f0984a")}{ring(209, 1343, 14, "#f0984a")}{ring(146, 1373, 14, "#f0984a")}
        {plus(245, 1276, 17, G)}{plus(232, 1315, 17, G)}{plus(289, 1338, 17, G)}{plus(181, 1366, 17, G)}{plus(248, 1361, 17, G)}
      </>
    ),
  },
  {
    label: "直方图",
    draw: <>{[8, 15, 50, 81, 93, 81, 50, 23, 8].map((h, i) => rect(358 + i * 15, 1359 - h, 12, h, "#cde6da"))}</>,
  },
  {
    label: "盒须图",
    draw: (
      <>
        {rect(588, 1311, 27, 15, LG)}{rect(588, 1326, 27, 33, G)}{rect(635, 1293, 27, 33, LG)}{rect(635, 1326, 27, 19, G)}
        {rect(681, 1307, 27, 30, LG)}{rect(681, 1337, 27, 28, G)}{rect(729, 1287, 27, 42, LG)}{rect(729, 1329, 27, 21, G)}
        {line("M601 1284v88M592 1284h20M592 1372h20M649 1277v102M639 1277h20M639 1379h20M695 1273v110M685 1273h20M685 1383h20M742 1265v122M732 1265h20M732 1387h20", "#333", 3)}
      </>
    ),
  },
  {
    label: "甘特图",
    draw: (
      <>
        {rect(123, 1428, 29, 24, "#cde6da")}{rect(173, 1428, 14, 24, "#fbdcc0")}{rect(189, 1428, 12, 24, "#feeddb")}{rect(222, 1428, 6, 24, "#fbdcc0")}{rect(240, 1428, 24, 24, "#feeddb")}
        {rect(123, 1467, 18, 24, "#dff1e7")}{rect(142, 1467, 15, 24, "#cde6da")}{rect(168, 1467, 12, 24, "#cde6da")}{rect(189, 1467, 43, 24, "#dff1e7")}{rect(249, 1467, 24, 24, "#fbdcc0")}
        {rect(123, 1505, 6, 24, "#cde6da")}{rect(142, 1505, 28, 24, "#feeddb")}{rect(170, 1505, 7, 24, "#fbdcc0")}{rect(182, 1505, 12, 24, "#dff1e7")}{rect(215, 1505, 21, 24, "#cde6da")}{rect(252, 1505, 12, 24, "#feeddb")}
      </>
    ),
  },
  {
    label: "标靶图",
    draw: (
      <>
        {rect(360, 1434, 177, 31, "#f6f6f7")}{rect(360, 1434, 148, 31, "#e8e8e8", 1)}{rect(360, 1442, 93, 16, G)}{rect(464, 1434, 4, 31, "#333")}
        {rect(360, 1482, 177, 31, "#f6f6f7")}{rect(360, 1482, 130, 31, "#e4e4e4", 1)}{rect(360, 1489, 150, 16, G)}{rect(491, 1482, 4, 31, "#333")}
        {rect(360, 1530, 177, 31, "#f6f6f7")}{rect(360, 1530, 93, 31, "#e4e4e4", 1)}{rect(360, 1536, 78, 16, G)}{rect(513, 1530, 4, 31, "#333")}
      </>
    ),
  },
  {
    label: "填充气泡图",
    draw: (
      <>
        {dot(622, 1520, 36, LG)}{dot(626, 1467, 14, G)}{dot(662, 1457, 19, G)}{dot(698, 1460, 12, LG)}{dot(736, 1478, 26, "#fdbb79")}{dot(680, 1498, 22, "#fdbb79")}{dot(715, 1517, 14, "#f28e2b")}{dot(678, 1540, 16, G)}
      </>
    ),
  },
];

function ShowMe() {
  return (
    <aside className="absolute top-[7px] right-[5px] z-10 flex w-[254px] flex-col text-black">
      <button type="button" className="z-10 -mb-px ml-auto flex h-[46px] w-[136px] items-center gap-[6px] border border-b-0 border-[#dcdcdc] bg-[#fafafa] pb-1.5 pl-3 text-base leading-6 shadow-[4px_0_2px_-1px_#c4c4c4]">
        <svg viewBox="0 0 21 19" width={21} height={19} aria-hidden="true">
          <path d="M0 0h16v4H0z" fill="#85709b" /><path d="M0 5h21v4H0z" fill="#7fa4cd" /><path d="M0 10h9v4H0z" fill="#f2a478" /><path d="M0 15h13v4H0z" fill="#f87383" />
        </svg>
        智能推荐
      </button>
      <div className="h-[694px] border border-[#dcdcdc] bg-[#fafafa] px-4 pt-[17px] shadow-[3px_3px_3px_#a8a8a8]">
        <div className="grid h-[455px] w-[220px] grid-cols-3 grid-rows-8 gap-[5px]">
          {thumbs.map((th, i) => (
            <button
              key={th.label}
              type="button"
              aria-label={th.label}
              className={
                "min-h-0 overflow-hidden bg-white " +
                (th.label === "树状图" ? "border border-[#222]" : th.label === "散点图" ? "rounded-xs border-2 border-[#ec9350]" : "border border-[#dedede]")
              }
            >
              <svg viewBox={`${cols[i % 3]} ${rows[Math.floor(i / 3)]} 204 151`} className="block h-full w-full" aria-hidden="true">{th.draw}</svg>
            </button>
          ))}
        </div>
        <p className="mt-5 pl-[2px] leading-6">对于树状图，尝试</p>
        <p className="mt-[7px] flex items-center gap-1.5 pl-[2px] leading-6">
          1 个或多个
          <span className="flex h-[25px] w-[60px] items-center justify-center rounded-full bg-[#4996b2] pr-1 text-white">维度</span>
        </p>
        <p className="mt-[10px] flex items-center gap-1.5 pl-[2px] leading-6">
          1 个或 2 个
          <span className="flex h-[25px] w-[60px] items-center justify-center rounded-full bg-[#00b180] pr-1 text-white">度量</span>
        </p>
      </div>
    </aside>
  );
}

const sheets = ["文字云", "气泡图制作文字云", "气泡图", "热图", "热图2", "突出显示图", "树状图"];

function SheetTabs() {
  const tab = "flex h-full items-center border-r border-[#c6c6c6] pr-[7px] pl-2 ";
  return (
    <nav className="flex h-[37px] items-center border-b border-[#cfcfcf] bg-[#e5e5e5] text-[#555]">
      <button type="button" className="flex h-full w-[152px] items-center gap-[6px] border-r border-[#c6c6c6]">
        <svg viewBox="0 0 11 15" width={11} height={15} fill="none" stroke="#777" strokeWidth={1.3} aria-hidden="true"><ellipse cx="5" cy="3" rx="4.500" ry="2.200" /><path d="M.5 3v9q1 2 4.500 2t4.500-2V3" /></svg>
        数据源
      </button>
      {sheets.map((s) => <button key={s} type="button" className={tab}>{s}</button>)}
      <button type="button" className={tab + "bg-[#fafafa]"}>树状图2</button>
      {["新建工作表", "新建仪表板", "新建故事"].map((label, i) => (
        <button key={label} type="button" aria-label={label} className="flex h-full w-[41px] items-center justify-center border-r border-[#c6c6c6]">
          <svg viewBox="0 0 20 19" width={20} height={19} fill="none" stroke="#777" strokeWidth={1.3} aria-hidden="true">
            {i === 0 && <path d="M10 14.500H1.500V1.500h13v8M5 12V9M8 12V6M11 11V4" />}
            {i === 1 && <path d="M10 13.500H1.500V1.500h13v8M1.500 7.500h13M8 1.500v12" />}
            {i === 2 && <path d="M9 14.500V5Q6 2 1.500 1.500v11q4 0 7.500 2.500M9 4.500Q11 2 14.500 1.500v8" />}
            <path d="M10 14.500h9M14.500 10v9" stroke="#555" strokeWidth={2.200} />
          </svg>
        </button>
      ))}
    </nav>
  );
}

function StatusBar() {
  return (
    <footer className="relative flex h-[23px] items-center bg-[#ebebeb] whitespace-nowrap text-black [font-family:Roboto,'Noto_Sans_CJK_SC',sans-serif]">
      <span className="w-[82px]">2 个标记</span>
      <span className="w-[94px]">1 行 x 1 列</span>
      <span>总和(销售额) 的总计 %: 100%</span>
      <div className="ml-auto flex h-full items-center">
        <span className="h-full w-[159px] border-l border-[#c6c6c6]" />
        <span className="h-full w-[34px] border-l border-[#c6c6c6]" />
        <span className="h-full w-[33px] border-l border-[#c6c6c6]" />
        <span className="h-full w-[59px] border-l border-[#c6c6c6]" />
        <span className="flex h-full w-[89px] items-center gap-[13px] border-l border-[#c6c6c6] pl-[10px]">
          {["M0 0v9M7 0v9L2 4.500z", "M6 0v9L1 4.500z", "M1 0v9l5-4.500z", "M7 0v9M0 0v9l5-4.500z"].map((d) => (
            <button key={d} type="button" aria-label="导航"><svg viewBox="0 0 8 9" width={7} height={9} fill="#b4b4b4" stroke="#b4b4b4" strokeWidth={0.8}><path d={d} /></svg></button>
          ))}
        </span>
        <span className="flex h-full w-[84px] items-center gap-[13px] border-l border-[#c6c6c6] pl-[10px]">
          <svg viewBox="0 0 14 14" width={14} height={14} fill="#b4b4b4" aria-hidden="true"><path d="M0 0h4v4H0zM5 0h4v4H5zM10 0h4v4h-4zM0 5h4v4H0zM5 5h4v4H5zM10 5h4v4h-4zM0 10h4v4H0zM5 10h4v4H5zM10 10h4v4h-4z" /></svg>
          <svg viewBox="0 0 14 14" width={14} height={14} fill="#b4b4b4" aria-hidden="true"><path d="M0 0h14v9H0zM0 10h4v4H0zM5 10h4v4H5zM10 10h4v4h-4z" /></svg>
          <span className="size-[14px] bg-[#666]" />
        </span>
      </div>
      <p className="absolute right-4 bottom-1 text-xl leading-7 font-light text-[#777] [text-shadow:1px_1px_0_#fff]">CSDN @学如春起之苗，不见其增，日有所长</p>
    </footer>
  );
}

export default function App() {
  return (
    <div className="relative flex min-h-screen flex-col bg-[#f4f4f4] text-[15px] leading-[22px] [font-family:'Open_Sans','Noto_Sans_CJK_SC',sans-serif]">
      <Toolbar />
      <div className="flex flex-1">
        <DataPane />
        <Cards />
        <Canvas />
      </div>
      <SheetTabs />
      <StatusBar />
      <ShowMe />
      <div className="pointer-events-none absolute top-[345px] left-[13px] z-20 h-[427px] w-[258px] border-2 border-[#ee1c24]" />
      <span className="pointer-events-none absolute top-[285px] left-[136px] z-20 text-[34px] leading-[46px] text-[#ee1c24]">1</span>
      <div className="pointer-events-none absolute top-[223px] right-[154px] z-20 h-[84px] w-[109px] border-2 border-[#ee1c24]" />
      <span className="pointer-events-none absolute top-[184px] right-[243px] z-20 text-[34px] leading-[46px] text-[#ee1c24]">2</span>
    </div>
  );
}
